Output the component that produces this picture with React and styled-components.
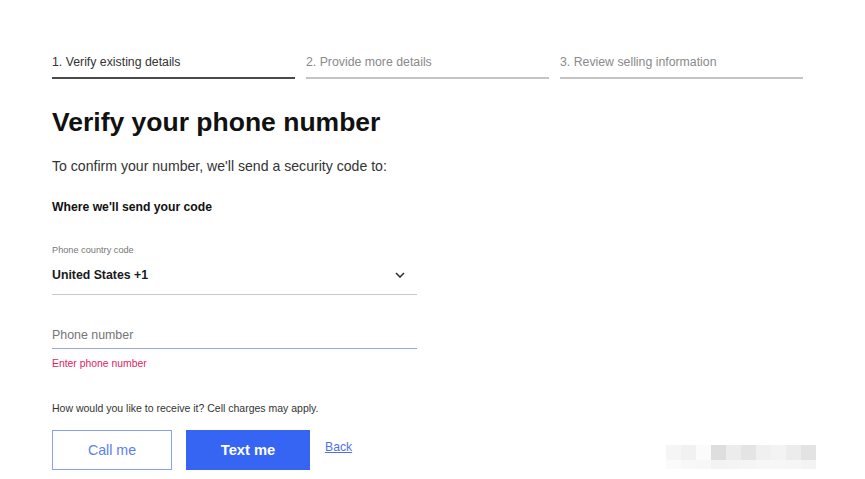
import React from "react";
import styled, { createGlobalStyle } from "styled-components";

const GlobalStyle = createGlobalStyle`
 body {
  margin: 0;
  background: #ffffff;
  font-family: "Liberation Sans", Arial, sans-serif;
  color: #111111;
 }
`;

const Page = styled.div`
 padding: 54px 0 0 52px;
 width: 865px;
 height: 479px;
 box-sizing: border-box;
 overflow: hidden;
`;

const Steps = styled.div`
 display: flex;
 gap: 11px;
 width: 751px;
`;

const Step = styled.div`
 flex: 1;
 font-size: 12.3px;
 line-height: 16px;
 padding-bottom: 7px;
 color: ${(p) => (p.$active ? "#333333" : "#8a8a8a")};
 border-bottom: 2px solid ${(p) => (p.$active ? "#4a4a4a" : "#c4c4c4")};
`;

const Title = styled.h1`
 margin: 28px 0 0;
 font-size: 26.5px;
 line-height: 30px;
 font-weight: 700;
 color: #111111;
`;

const Intro = styled.p`
 margin: 19px 0 0;
 font-size: 14.1px;
 line-height: 20px;
 color: #333333;
`;

const SectionLabel = styled.div`
 margin-top: 23px;
 font-size: 12.2px;
 line-height: 16px;
 font-weight: 700;
 color: #111111;
`;

const Form = styled.div`
 width: 365px;
`;

const FieldLabel = styled.div`
 margin-top: 29px;
 font-size: 9.2px;
 line-height: 12px;
 color: #777777;
`;

const Select = styled.div`
 display: flex;
 align-items: center;
 justify-content: space-between;
 height: 38px;
 border-bottom: 1.5px solid #c9c9c9;
 font-size: 12.3px;
 font-weight: 700;
 color: #191919;
 padding-right: 12px;
`;

const Input = styled.div`
 margin-top: 27px;
 height: 26px;
 display: flex;
 align-items: center;
 font-size: 12.4px;
 color: #767676;
 border-bottom: 1.5px solid #93a9f6;
`;

const ErrorText = styled.div`
 margin-top: 8px;
 font-size: 10.4px;
 line-height: 14px;
 color: #e0245e;
`;

const Hint = styled.div`
 margin-top: 30px;
 font-size: 10.5px;
 line-height: 14px;
 color: #333333;
`;

const Actions = styled.div`
 margin-top: 15px;
 display: flex;
 align-items: center;
 width: 764px;
`;

const Button = styled.button`
 height: 40px;
 width: ${(p) => p.$width}px;
 margin-right: 14px;
 box-sizing: border-box;
 font-family: inherit;
 font-size: ${(p) => (p.$primary ? 14.7 : 14.2)}px;
 font-weight: ${(p) => (p.$primary ? 700 : 400)};
 color: ${(p) => (p.$primary ? "#ffffff" : "#5b7ef2")};
 background: ${(p) => (p.$primary ? "#3665f3" : "#ffffff")};
 border: 1.5px solid ${(p) => (p.$primary ? "#3665f3" : "#86a1f6")};
 cursor: pointer;
`;

const BackLink = styled.a`
 margin-left: 1px;
 margin-bottom: 7px;
 font-size: 12.2px;
 color: #4f72ee;
 text-decoration: underline;
`;

const Mosaic = styled.div`
 margin-left: auto;
 margin-top: 13px;
 display: grid;
 grid-template-columns: repeat(10, 15px);
 grid-template-rows: 15px 9px;
`;

const Tile = styled.span`
 background: ${(p) => p.$c};
`;

const topTiles = ["#f5f5f5", "#f1f1f1", "#fbfbfb", "#dedede", "#ececec", "#e4e4e4", "#f0f0f0", "#f3f3f3", "#ececec", "#e3e3e3"];
const bottomTiles = ["#fbfbfb", "#f8f8f8", "#f7f7f7", "#f3f3f3", "#f4f4f4", "#f5f5f5", "#f7f7f7", "#f7f7f7", "#f6f6f6", "#f3f3f3"];

function Chevron() {
 return (
  <svg width="10" height="6" viewBox="0 0 10 6" fill="none">
   <polyline points="1,1 5,5 9,1" stroke="#333" strokeWidth="1.6" />
  </svg>
 );
}

export default function App() {
 return (
  <Page>
   <GlobalStyle />
   <Steps>
    <Step $active>1. Verify existing details</Step>
    <Step>2. Provide more details</Step>
    <Step>3. Review selling information</Step>
   </Steps>
   <Title>Verify your phone number</Title>
   <Intro>To confirm your number, we'll send a security code to:</Intro>
   <SectionLabel>Where we'll send your code</SectionLabel>
   <Form>
    <FieldLabel>Phone country code</FieldLabel>
    <Select>
     United States +1
     <Chevron />
    </Select>
    <Input>Phone number</Input>
    <ErrorText>Enter phone number</ErrorText>
   </Form>
   <Hint>How would you like to receive it? Cell charges may apply.</Hint>
   <Actions>
    <Button $width={120}>Call me</Button>
    <Button $primary $width={124}>Text me</Button>
    <BackLink href="#">Back</BackLink>
    <Mosaic>
     {topTiles.map((c, i) => (
      <Tile key={"t" + i} $c={c} />
     ))}
     {bottomTiles.map((c, i) => (
      <Tile key={"b" + i} $c={c} />
     ))}
    </Mosaic>
   </Actions>
  </Page>
 );
}
